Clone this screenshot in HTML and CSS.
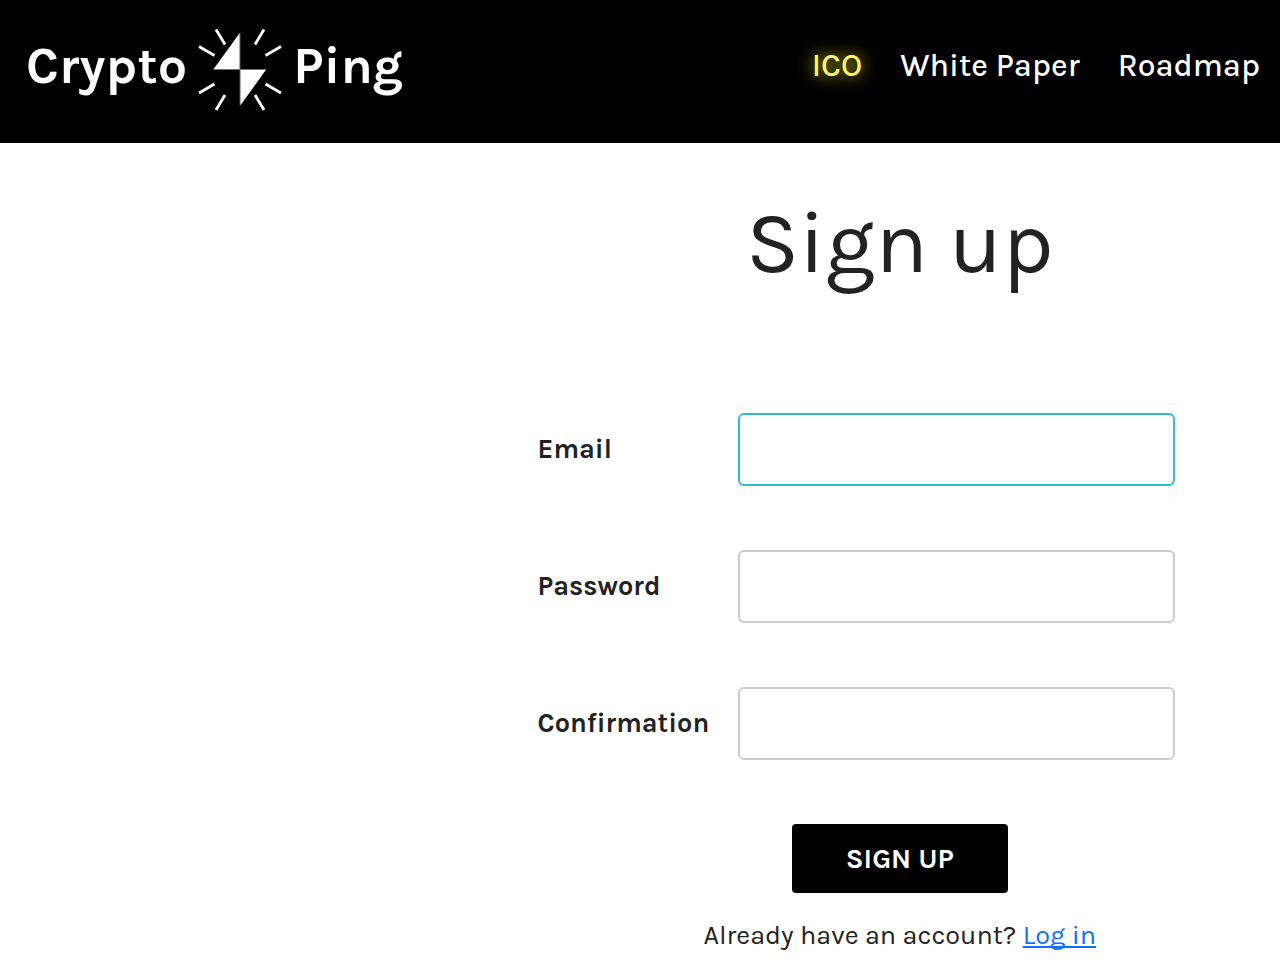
FILE: index.html
```html
<!DOCTYPE html>
<html lang="en">
<head>
    <meta charset="UTF-8">
    <meta name="viewport" content="width=device-width, initial-scale=1.0">
    <title>CryptoPing - Sign up</title>
    <link rel="stylesheet" href="styles.css">
</head>
<body>
    <header>
        <a class="logo" href="#">
            <span>Crypto</span>
            <svg class="bolt" viewBox="0 0 84 84" aria-hidden="true">
                <path class="shape" d="M41.7 5.5V41.7H15.5ZM42.3 42.3H68L42.3 78Z"/>
                <path class="hairline" d="M15.5 42H68M42 5.5V78"/>
                <path class="rays" d="M18 2 27 17M66 2 57 17M1 19 16.5 28M83 19 67.5 28M1 65.5 16.5 56.5M83 65.5 67.5 56.5M18 82.5 27 67.5M66 82.5 57 67.5"/>
            </svg>
            <span>Ping</span>
        </a>
        <nav>
            <a class="active" href="#">ICO</a>
            <a href="#">White Paper</a>
            <a href="#">Roadmap</a>
        </nav>
    </header>

    <main>
        <h1>Sign up</h1>

        <form>
            <div class="field">
                <label for="email">Email</label>
                <input class="focused" type="email" id="email" name="email">
            </div>
            <div class="field">
                <label for="password">Password</label>
                <input type="password" id="password" name="password">
            </div>
            <div class="field">
                <label for="confirmation">Confirmation</label>
                <input type="password" id="confirmation" name="confirmation">
            </div>
            <button type="submit">SIGN UP</button>
        </form>

        <p class="login">Already have an account? <a href="#">Log in</a></p>
    </main>
</body>
</html>
```
FILE: styles.css
```css
* {
    box-sizing: border-box;
}

body {
    margin: 0;
    font-family: "Karla", "Open Sans", sans-serif;
    font-size: 27px;
    line-height: 37px;
    background-color: #fff;
    color: #222;
}

header {
    display: flex;
    justify-content: space-between;
    align-items: center;
    padding: 24px 20px 28px 26px;
    background-color: #000;
}

header a {
    color: #fff;
    text-decoration: none;
}

.logo {
    display: flex;
    align-items: center;
    gap: 11px;
    font-size: 52px;
    line-height: 72px;
    font-weight: bold;
}

.logo span {
    padding-bottom: 8px;
}

.bolt {
    width: 84px;
    height: 91px;
}

.bolt .shape {
    fill: #fff;
}

.bolt .hairline {
    stroke: #999;
    stroke-width: 0.6;
}

.bolt .rays {
    fill: none;
    stroke: #fff;
    stroke-width: 2.8;
}

nav {
    display: flex;
    gap: 38px;
    padding-bottom: 8px;
    font-size: 32px;
    line-height: 44px;
    font-weight: 500;
}

nav .active {
    color: #fff66b;
    text-shadow: 0 0 16px #ffee00;
}

main {
    margin-left: 42%;
    padding: 40px 18px 16px 0;
}

h1 {
    margin: 0 0 110px;
    font-size: 88px;
    line-height: 120px;
    font-weight: normal;
    text-align: center;
}

form {
    display: flex;
    flex-direction: column;
    gap: 64px;
}

.field {
    display: grid;
    grid-template-columns: 200px minmax(0, 437px);
    align-items: center;
}

label {
    font-weight: bold;
}

input {
    width: 100%;
    height: 73px;
    padding: 0 20px;
    font: inherit;
    color: inherit;
    background-color: #fff;
    border: 2px solid #ccc;
    border-radius: 6px;
    outline: none;
}

input.focused,
input:focus {
    border-color: #34b8dc;
}

button {
    align-self: center;
    padding: 16px 54px;
    font: inherit;
    font-size: 28px;
    font-weight: bold;
    color: #fff;
    background-color: #000;
    border: 0;
    border-radius: 4px;
    cursor: pointer;
}

.login {
    margin: 24px 0 0;
    text-align: center;
}

.login a {
    color: #0f6fff;
    text-decoration-skip-ink: none;
}
```
